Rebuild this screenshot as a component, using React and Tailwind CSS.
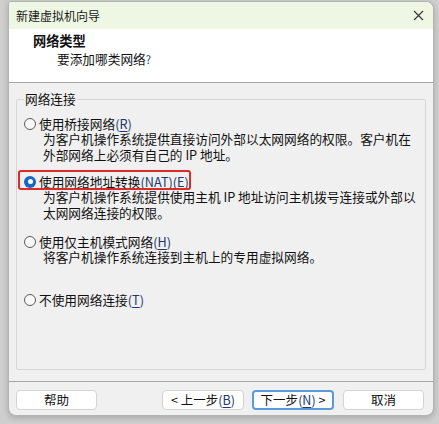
import React, { useState } from 'react'

const font = { fontFamily: '"Noto Sans CJK SC", "Noto Sans", sans-serif' }

function Key({ children }) {
  return (
    <span className="text-[#22386a]">
      (<span className="underline underline-offset-2">{children}</span>)
    </span>
  )
}

function Radio({ checked }) {
  return checked ? (
    <span className="w-[12px] h-[12px] rounded-full bg-[#1a64c8] flex items-center justify-center shrink-0">
      <span className="w-[5px] h-[5px] rounded-full bg-white" />
    </span>
  ) : (
    <span className="w-[12px] h-[12px] rounded-full border border-[#5c5c5c] bg-[#f8f8f8] shrink-0" />
  )
}

function Option({ checked, label, desc = [], marked, className = '' }) {
  return (
    <div className={className}>
      <div className="relative flex w-fit items-center h-[15px] gap-[3px] pl-[7px]">
        <Radio checked={checked} />
        <span className="whitespace-nowrap leading-[15px]">{label}</span>
        {marked && (
          <span className="absolute left-[1px] -right-[2px] -top-[4px] -bottom-[1px] border-2 border-[#e02a2a] rounded-[3px]" />
        )}
      </div>
      {desc.map((line, i) => (
        <div key={i} className="pl-[26px] h-[16px] leading-[16px] whitespace-nowrap">
          {line}
        </div>
      ))}
    </div>
  )
}

export default function App() {
  const [choice] = useState('nat')

  return (
    <div className="w-[439px] h-[424px] bg-[#cfcfcf] pl-[8px] pt-[1px] pr-[5px] pb-[8px]" style={font}>
      <div className="w-[426px] h-[415px] flex flex-col bg-[#f0f0f0] rounded-tr-[8px] rounded-tl-[3px] rounded-b-[8px] overflow-hidden border border-[#b4b4b4] shadow-[0_2px_6px_rgba(0,0,0,0.2)] text-[#111] text-[12.7px]">
        <div className="h-[27px] shrink-0 bg-[#eef7e3] flex items-center justify-between pl-[7px] pr-[8px]">
          <span className="text-[12px] text-[#1a1a1a]">新建虚拟机向导</span>
          <svg width="11" height="11" viewBox="0 0 11 11" className="mr-[1px]">
            <path d="M1 1 L10 10 M10 1 L1 10" stroke="#333" strokeWidth="1.1" fill="none" />
          </svg>
        </div>

        <div className="h-[54px] shrink-0 bg-white border-b border-[#a7a7a7] pt-[3px]">
          <div className="pl-[24px] font-bold text-[13.2px] leading-[18px]">网络类型</div>
          <div className="pl-[48px] leading-[18px]">
            要添加哪类网络<span className="text-[#22386a] text-[11px]">?</span>
          </div>
        </div>

        <div className="flex-1 px-[7px] pt-[8px]">
          <fieldset className="border border-[#d6d6d6] rounded-[2px] h-[279px]">
            <legend className="ml-[7px] px-[1px] h-[16px] leading-[16px]">网络连接</legend>
            <Option
              className="mt-[9px]"
              checked={choice === 'bridge'}
              label={<>使用桥接网络<Key>R</Key></>}
              desc={['为客户机操作系统提供直接访问外部以太网网络的权限。客户机在', '外部网络上必须有自己的 IP 地址。']}
            />
            <Option
              className="mt-[11px]"
              checked={choice === 'nat'}
              marked
              label={<>使用网络地址转换<Key>NAT</Key><Key>E</Key></>}
              desc={['为客户机操作系统提供使用主机 IP 地址访问主机拨号连接或外部以', '太网网络连接的权限。']}
            />
            <Option
              className="mt-[13px]"
              checked={choice === 'host'}
              label={<>使用仅主机模式网络<Key>H</Key></>}
              desc={['将客户机操作系统连接到主机上的专用虚拟网络。']}
            />
            <Option
              className="mt-[27px]"
              checked={choice === 'none'}
              label={<>不使用网络连接<Key>T</Key></>}
            />
          </fieldset>
        </div>

        <div className="h-[34px] shrink-0 border-t border-[#a7a7a7] flex items-start pt-[8px] pl-[7px] pr-[9px]">
          <button className="w-[81px] h-[20px] bg-white border border-[#d3d3d3] rounded-[4px] text-[12.5px] leading-none">帮助</button>
          <div className="flex-1" />
          <button className="w-[82px] h-[20px] bg-white border border-[#d3d3d3] rounded-[4px] text-[12.5px] leading-none">
            &lt; 上一步<Key>B</Key>
          </button>
          <button className="ml-[8px] w-[82px] h-[20px] bg-white border-2 border-[#5a9be0] rounded-[4px] text-[12.5px] leading-none">
            下一步<Key>N</Key> &gt;
          </button>
          <button className="ml-[9px] w-[81px] h-[20px] bg-white border border-[#d3d3d3] rounded-[4px] text-[12.5px] leading-none">取消</button>
        </div>
      </div>
    </div>
  )
}
